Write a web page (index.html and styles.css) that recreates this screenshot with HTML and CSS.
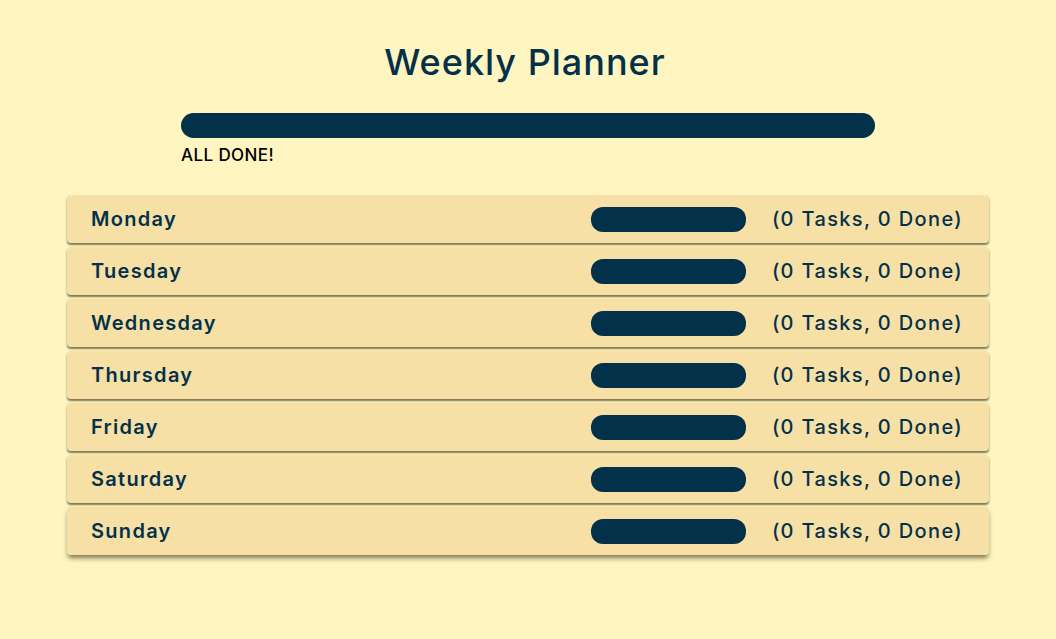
FILE: index.html
```html
<!DOCTYPE html>
<html>
<head>
<meta charset="utf-8">
<link rel="stylesheet" href="styles.css">
</head>
<body>
<div class="page">
  <h1 class="title">Weekly Planner</h1>
  <div class="overall">
    <div class="bar big"></div>
    <div class="status">ALL DONE!</div>
  </div>
  <div class="days">
    <div class="day"><span class="name">Monday</span><div class="right"><div class="bar small"></div><span class="count">(0 Tasks, 0 Done)</span></div></div>
    <div class="day"><span class="name">Tuesday</span><div class="right"><div class="bar small"></div><span class="count">(0 Tasks, 0 Done)</span></div></div>
    <div class="day"><span class="name">Wednesday</span><div class="right"><div class="bar small"></div><span class="count">(0 Tasks, 0 Done)</span></div></div>
    <div class="day"><span class="name">Thursday</span><div class="right"><div class="bar small"></div><span class="count">(0 Tasks, 0 Done)</span></div></div>
    <div class="day"><span class="name">Friday</span><div class="right"><div class="bar small"></div><span class="count">(0 Tasks, 0 Done)</span></div></div>
    <div class="day"><span class="name">Saturday</span><div class="right"><div class="bar small"></div><span class="count">(0 Tasks, 0 Done)</span></div></div>
    <div class="day"><span class="name">Sunday</span><div class="right"><div class="bar small"></div><span class="count">(0 Tasks, 0 Done)</span></div></div>
  </div>
</div>
</body>
</html>
```
FILE: styles.css
```css
html, body {
  margin: 0;
  padding: 0;
  background: #fef5c0;
  font-family: "Inter", "Noto Sans", sans-serif;
  color: #04314a;
}
.page {
  padding-top: 38px;
  padding-bottom: 40px;
  display: flex;
  flex-direction: column;
  align-items: center;
}
.title {
  margin: 0 6px 0 0;
  font-size: 36px;
  font-weight: 500;
  line-height: 48px;
  letter-spacing: 1px;
  color: #04314a;
}
.overall {
  width: 694px;
  margin-top: 27px;
}
.bar {
  background: #04314a;
}
.bar.big {
  height: 25px;
  border-radius: 13px;
}
.status {
  margin-top: 6px;
  font-size: 17px;
  line-height: 22px;
  font-weight: 500;
  letter-spacing: 0.4px;
  color: #000;
}
.days {
  width: 922px;
  margin-top: 29px;
  display: flex;
  flex-direction: column;
  gap: 4px;
}
.day {
  height: 48px;
  background: #f6e0a6;
  border-radius: 4px;
  box-shadow: 0 2px 2px rgba(60, 50, 20, 0.65);
  display: flex;
  align-items: center;
  justify-content: space-between;
  padding: 0 26px 0 24px;
  font-size: 20px;
  font-weight: 600;
  letter-spacing: 1.3px;
}
.day:last-child {
  box-shadow: 0 4px 5px -1px rgba(60, 50, 20, 0.65);
}
.right {
  display: flex;
  align-items: center;
  gap: 26px;
}
.bar.small {
  width: 155px;
  height: 25px;
  border-radius: 12px;
}
.count {
  font-weight: 500;
  letter-spacing: 1.35px;
}
```
